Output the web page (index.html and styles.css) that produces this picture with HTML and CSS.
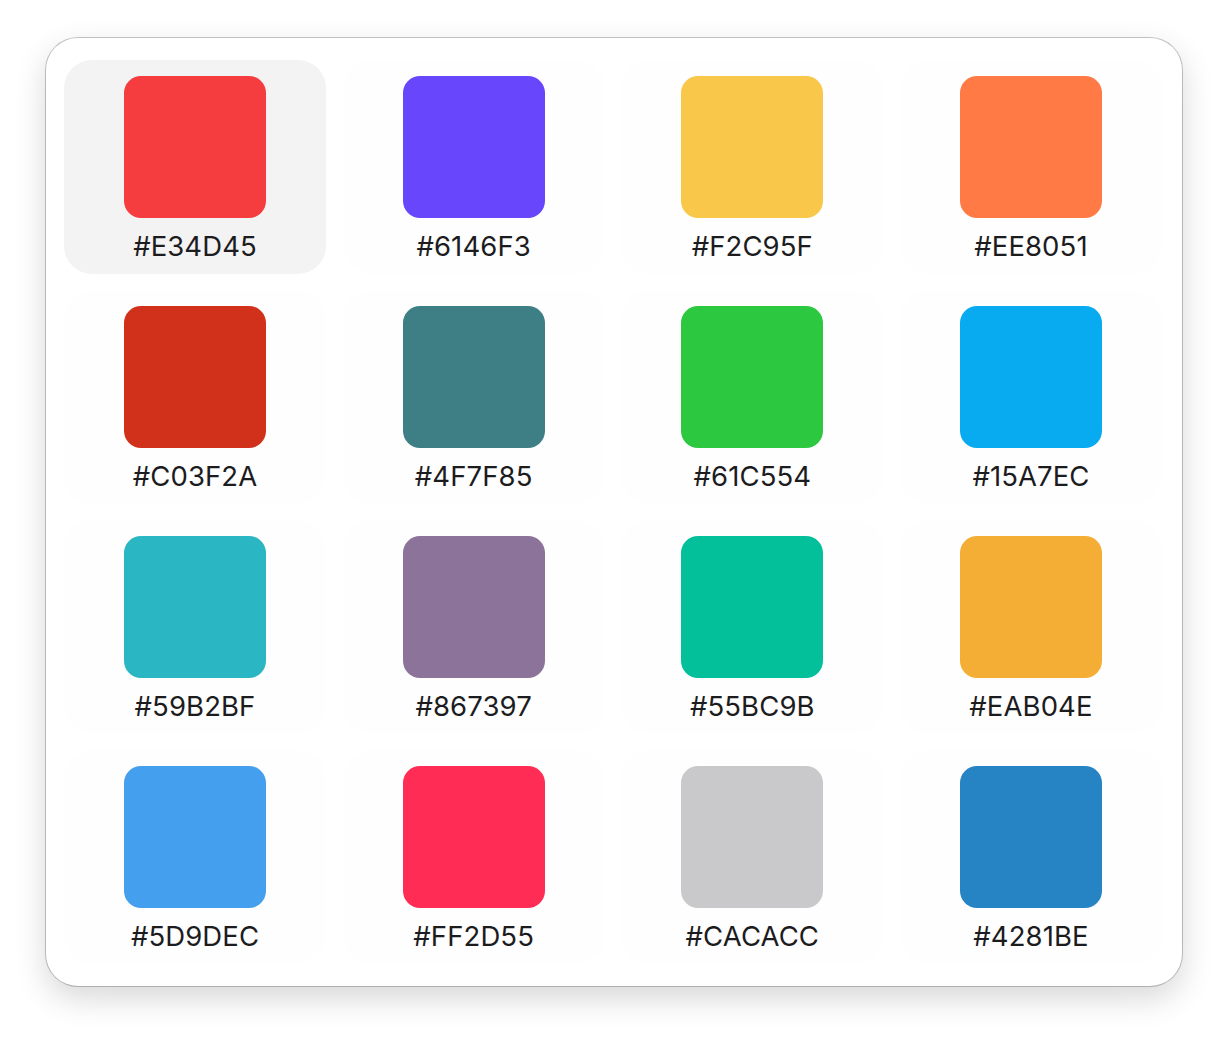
FILE: index.html
```html
<!DOCTYPE html>
<html>
<head>
<meta charset="utf-8">
<link rel="stylesheet" href="styles.css">
</head>
<body>
<div class="card">
  <div class="grid">
    <div class="cell selected"><div class="swatch c1"></div><div class="label">#E34D45</div></div>
    <div class="cell"><div class="swatch c2"></div><div class="label">#6146F3</div></div>
    <div class="cell"><div class="swatch c3"></div><div class="label">#F2C95F</div></div>
    <div class="cell"><div class="swatch c4"></div><div class="label">#EE8051</div></div>
    <div class="cell"><div class="swatch c5"></div><div class="label">#C03F2A</div></div>
    <div class="cell"><div class="swatch c6"></div><div class="label">#4F7F85</div></div>
    <div class="cell"><div class="swatch c7"></div><div class="label">#61C554</div></div>
    <div class="cell"><div class="swatch c8"></div><div class="label">#15A7EC</div></div>
    <div class="cell"><div class="swatch c9"></div><div class="label">#59B2BF</div></div>
    <div class="cell"><div class="swatch c10"></div><div class="label">#867397</div></div>
    <div class="cell"><div class="swatch c11"></div><div class="label">#55BC9B</div></div>
    <div class="cell"><div class="swatch c12"></div><div class="label">#EAB04E</div></div>
    <div class="cell"><div class="swatch c13"></div><div class="label">#5D9DEC</div></div>
    <div class="cell"><div class="swatch c14"></div><div class="label">#FF2D55</div></div>
    <div class="cell"><div class="swatch c15"></div><div class="label">#CACACC</div></div>
    <div class="cell"><div class="swatch c16"></div><div class="label">#4281BE</div></div>
  </div>
</div>
</body>
</html>
```
FILE: styles.css
```css
html, body {
  margin: 0;
  padding: 0;
  background: #ffffff;
}
body {
  min-height: 1040px;
  box-sizing: border-box;
  padding: 38px 0 0 46px;
  font-family: Inter, "Liberation Sans", sans-serif;
}
.card {
  width: 1136px;
  height: 948px;
  box-sizing: border-box;
  background: #ffffff;
  border-radius: 32px;
  padding: 22px 18px;
  box-shadow: 0 0 0 1px rgba(0, 0, 0, 0.22), 0 12px 32px rgba(0, 0, 0, 0.16);
}
.grid {
  display: grid;
  grid-template-columns: repeat(4, 262px);
  grid-auto-rows: 214px;
  column-gap: 16.67px;
  row-gap: 16px;
}
.cell {
  display: flex;
  flex-direction: column;
  align-items: center;
  padding-top: 16px;
  box-sizing: border-box;
  border-radius: 28px;
  background: #fefefe;
}
.cell.selected {
  background: #f3f3f3;
}
.swatch {
  width: 142px;
  height: 142px;
  border-radius: 17px;
}
.label {
  margin-top: 12px;
  font-size: 27.5px;
  line-height: 32px;
  letter-spacing: 0.1px;
  color: #1c1c1e;
}
.c1 { background: #f53c3e; }
.c2 { background: #6846fc; }
.c3 { background: #f9c74a; }
.c4 { background: #ff7a45; }
.c5 { background: #d1311b; }
.c6 { background: #3e7f85; }
.c7 { background: #2cc940; }
.c8 { background: #08aaf0; }
.c9 { background: #2ab6c2; }
.c10 { background: #8c7399; }
.c11 { background: #04c09a; }
.c12 { background: #f5ae35; }
.c13 { background: #459fef; }
.c14 { background: #ff2d55; }
.c15 { background: #c9c9cb; }
.c16 { background: #2684c5; }
```
